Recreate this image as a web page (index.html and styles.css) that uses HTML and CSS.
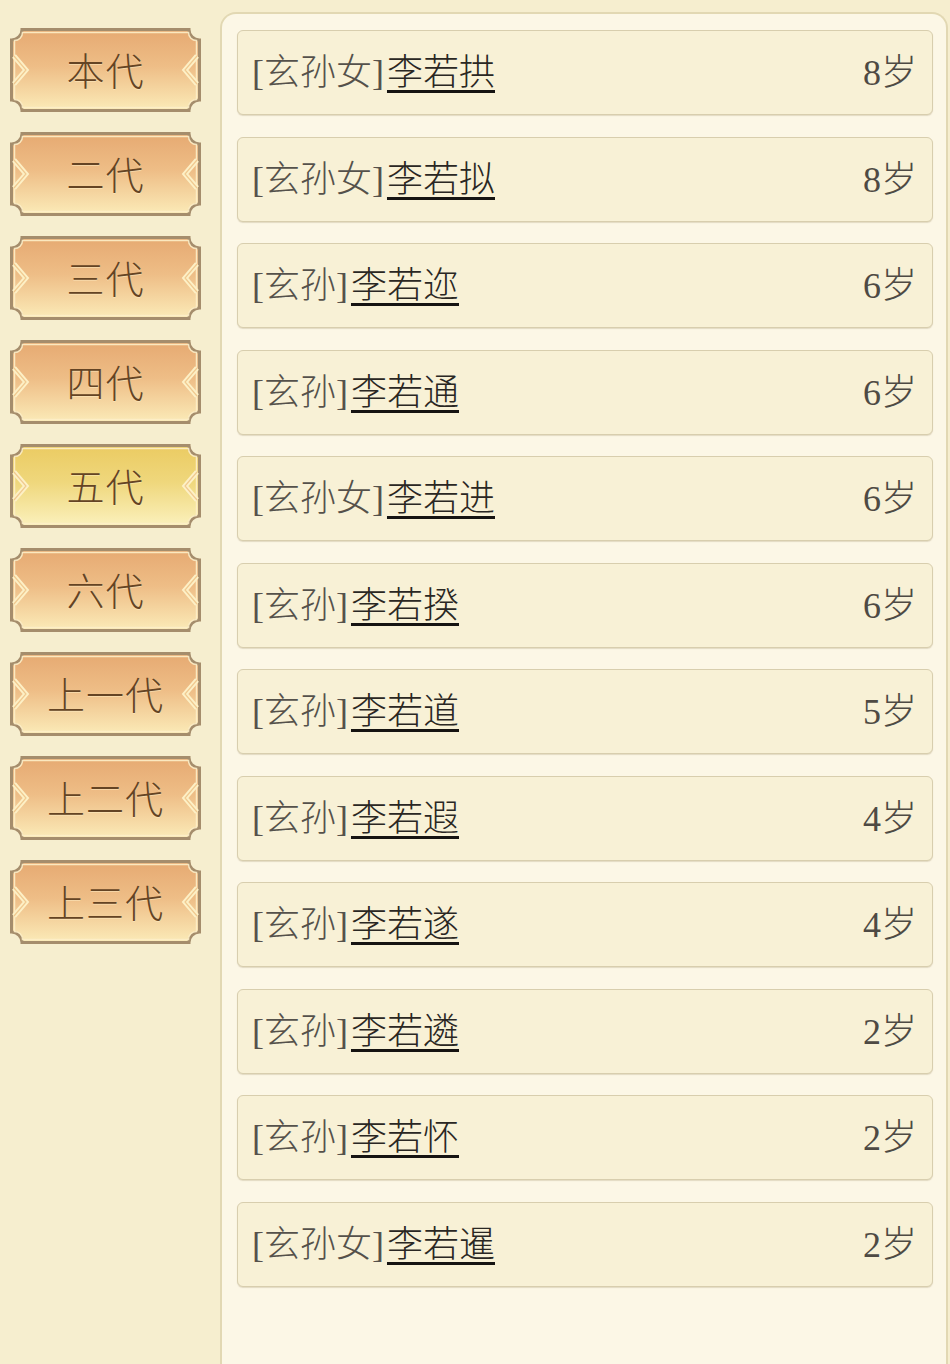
FILE: index.html
```html
<!DOCTYPE html>
<html lang="zh-CN">
<head>
  <meta charset="UTF-8">
  <meta name="viewport" content="width=device-width,initial-scale=1.0">
  <title>族谱</title>
  <link rel="stylesheet" href="styles.css">
</head>
<body>
  <!-- 共用图形 -->
  <svg class="defs" width="0" height="0" aria-hidden="true">
    <defs>
      <linearGradient id="g-orange" x1="0" y1="0" x2="0" y2="1">
        <stop offset="0" stop-color="#e6aa72"/>
        <stop offset="0.45" stop-color="#eebd86"/>
        <stop offset="1" stop-color="#fbebb8"/>
      </linearGradient>
      <linearGradient id="g-yellow" x1="0" y1="0" x2="0" y2="1">
        <stop offset="0" stop-color="#ebcb62"/>
        <stop offset="0.45" stop-color="#efd77c"/>
        <stop offset="1" stop-color="#fbf1bd"/>
      </linearGradient>
      <symbol id="ticket" viewBox="0 0 191 84">
        <path d="M12,1.5 H179 A10.5 10.5 0 0 0 189.5,12 V72 A10.5 10.5 0 0 0 179,82.5 H12 A10.5 10.5 0 0 0 1.5,72 V12 A10.5 10.5 0 0 0 12,1.5 Z"
              stroke="#a58d6c" stroke-width="3"/>
        <path d="M12.5,4.5 H178.5 A8 8 0 0 0 186.5,12.5 V71.5 A8 8 0 0 0 178.5,79.5 H12.5 A8 8 0 0 0 4.5,71.5 V12.5 A8 8 0 0 0 12.5,4.5 Z"
              fill="none" stroke="#fdeec8" stroke-width="1.5" opacity="0.9"/>
        <polyline points="4,28 16,42 4,56" fill="none" stroke="#fdf0c6" stroke-width="5"/>
        <polyline points="4,28 16,42 4,56" fill="none" stroke="#f0c990" stroke-width="1.2"/>
        <polyline points="187,28 175,42 187,56" fill="none" stroke="#fdf0c6" stroke-width="5"/>
        <polyline points="187,28 175,42 187,56" fill="none" stroke="#f0c990" stroke-width="1.2"/>
      </symbol>
    </defs>
  </svg>

  <!-- 代数切换 -->
  <nav class="gen-tabs">
    <div class="tab"><svg viewBox="0 0 191 84"><use href="#ticket"/></svg><span>本代</span></div>
    <div class="tab"><svg viewBox="0 0 191 84"><use href="#ticket"/></svg><span>二代</span></div>
    <div class="tab"><svg viewBox="0 0 191 84"><use href="#ticket"/></svg><span>三代</span></div>
    <div class="tab"><svg viewBox="0 0 191 84"><use href="#ticket"/></svg><span>四代</span></div>
    <div class="tab active"><svg viewBox="0 0 191 84"><use href="#ticket"/></svg><span>五代</span></div>
    <div class="tab"><svg viewBox="0 0 191 84"><use href="#ticket"/></svg><span>六代</span></div>
    <div class="tab"><svg viewBox="0 0 191 84"><use href="#ticket"/></svg><span>上一代</span></div>
    <div class="tab"><svg viewBox="0 0 191 84"><use href="#ticket"/></svg><span>上二代</span></div>
    <div class="tab"><svg viewBox="0 0 191 84"><use href="#ticket"/></svg><span>上三代</span></div>
  </nav>

  <!-- 成员列表 -->
  <main class="panel">
    <div class="member"><span class="who"><span class="rel">[玄孙女]</span><a class="name">李若拱</a></span><span class="age">8岁</span></div>
    <div class="member"><span class="who"><span class="rel">[玄孙女]</span><a class="name">李若拟</a></span><span class="age">8岁</span></div>
    <div class="member"><span class="who"><span class="rel">[玄孙]</span><a class="name">李若迩</a></span><span class="age">6岁</span></div>
    <div class="member"><span class="who"><span class="rel">[玄孙]</span><a class="name">李若通</a></span><span class="age">6岁</span></div>
    <div class="member"><span class="who"><span class="rel">[玄孙女]</span><a class="name">李若进</a></span><span class="age">6岁</span></div>
    <div class="member"><span class="who"><span class="rel">[玄孙]</span><a class="name">李若揆</a></span><span class="age">6岁</span></div>
    <div class="member"><span class="who"><span class="rel">[玄孙]</span><a class="name">李若道</a></span><span class="age">5岁</span></div>
    <div class="member"><span class="who"><span class="rel">[玄孙]</span><a class="name">李若遐</a></span><span class="age">4岁</span></div>
    <div class="member"><span class="who"><span class="rel">[玄孙]</span><a class="name">李若遂</a></span><span class="age">4岁</span></div>
    <div class="member"><span class="who"><span class="rel">[玄孙]</span><a class="name">李若遴</a></span><span class="age">2岁</span></div>
    <div class="member"><span class="who"><span class="rel">[玄孙]</span><a class="name">李若怀</a></span><span class="age">2岁</span></div>
    <div class="member"><span class="who"><span class="rel">[玄孙女]</span><a class="name">李若暹</a></span><span class="age">2岁</span></div>
  </main>
</body>
</html>
```

FILE: styles.css
```css
/* ——— 全体变数 ——— */
:root {
  --bg: #f6eecf;      --panel: #fcf7e6;
  --row: #f8f1d6;     --row-line: #d8ceae;
  --panel-line: #e2d8b3;
  --tab-text: #644424; --text: #4a4640; --ink: #2a2723;
}
html, body { height:100%; }
body {
  margin:0; display:flex; align-items:flex-start;
  background:var(--bg); overflow:hidden;
  font-family:"Liberation Serif","Noto Sans CJK SC",serif;
}
.defs { position:absolute; width:0; height:0; overflow:hidden; }

/* ——— 左侧代数 ——— */
.gen-tabs {
  width:210px; flex:none; padding:28px 0 0 10px;
  display:flex; flex-direction:column; gap:20px;
}
.tab {
  position:relative; width:191px; height:84px;
  display:flex; align-items:center; justify-content:center;
  cursor:pointer;
}
.tab svg { position:absolute; left:0; top:0; width:191px; height:84px; }
.tab svg use { fill:url(#g-orange); }
.tab.active svg use { fill:url(#g-yellow); }
.tab span {
  position:relative; font-size:38px; font-weight:300;
  color:var(--tab-text); letter-spacing:1px;
  padding-bottom:3px;
  text-shadow:0 1px 0 rgba(255,240,200,0.5);
}

/* ——— 右侧列表 ——— */
.panel {
  flex:1; margin:12px 2px 0 0; min-height:1400px;
  background:var(--panel);
  border:2px solid var(--panel-line); border-bottom:none;
  border-radius:16px 16px 0 0;
  padding:16px 13px 0 15px;
  display:flex; flex-direction:column; gap:21.5px;
}
.member {
  height:85px; flex:none; box-sizing:border-box;
  display:flex; align-items:center; justify-content:space-between;
  padding:0 15px 7px 14px;
  background:var(--row); border:1px solid var(--row-line);
  border-radius:6px;
  box-shadow:0 1px 1px rgba(150,130,90,0.25);
  font-size:36px; font-weight:300; color:var(--text);
}
.who { display:flex; align-items:center; }
.rel { color:#55514b; }
.name {
  margin-left:3px;
  color:var(--ink); text-decoration:underline;
  text-decoration-thickness:3px; text-underline-offset:5px;
  text-decoration-color:#161412;
}
.age { color:#4e4a44; }
```
